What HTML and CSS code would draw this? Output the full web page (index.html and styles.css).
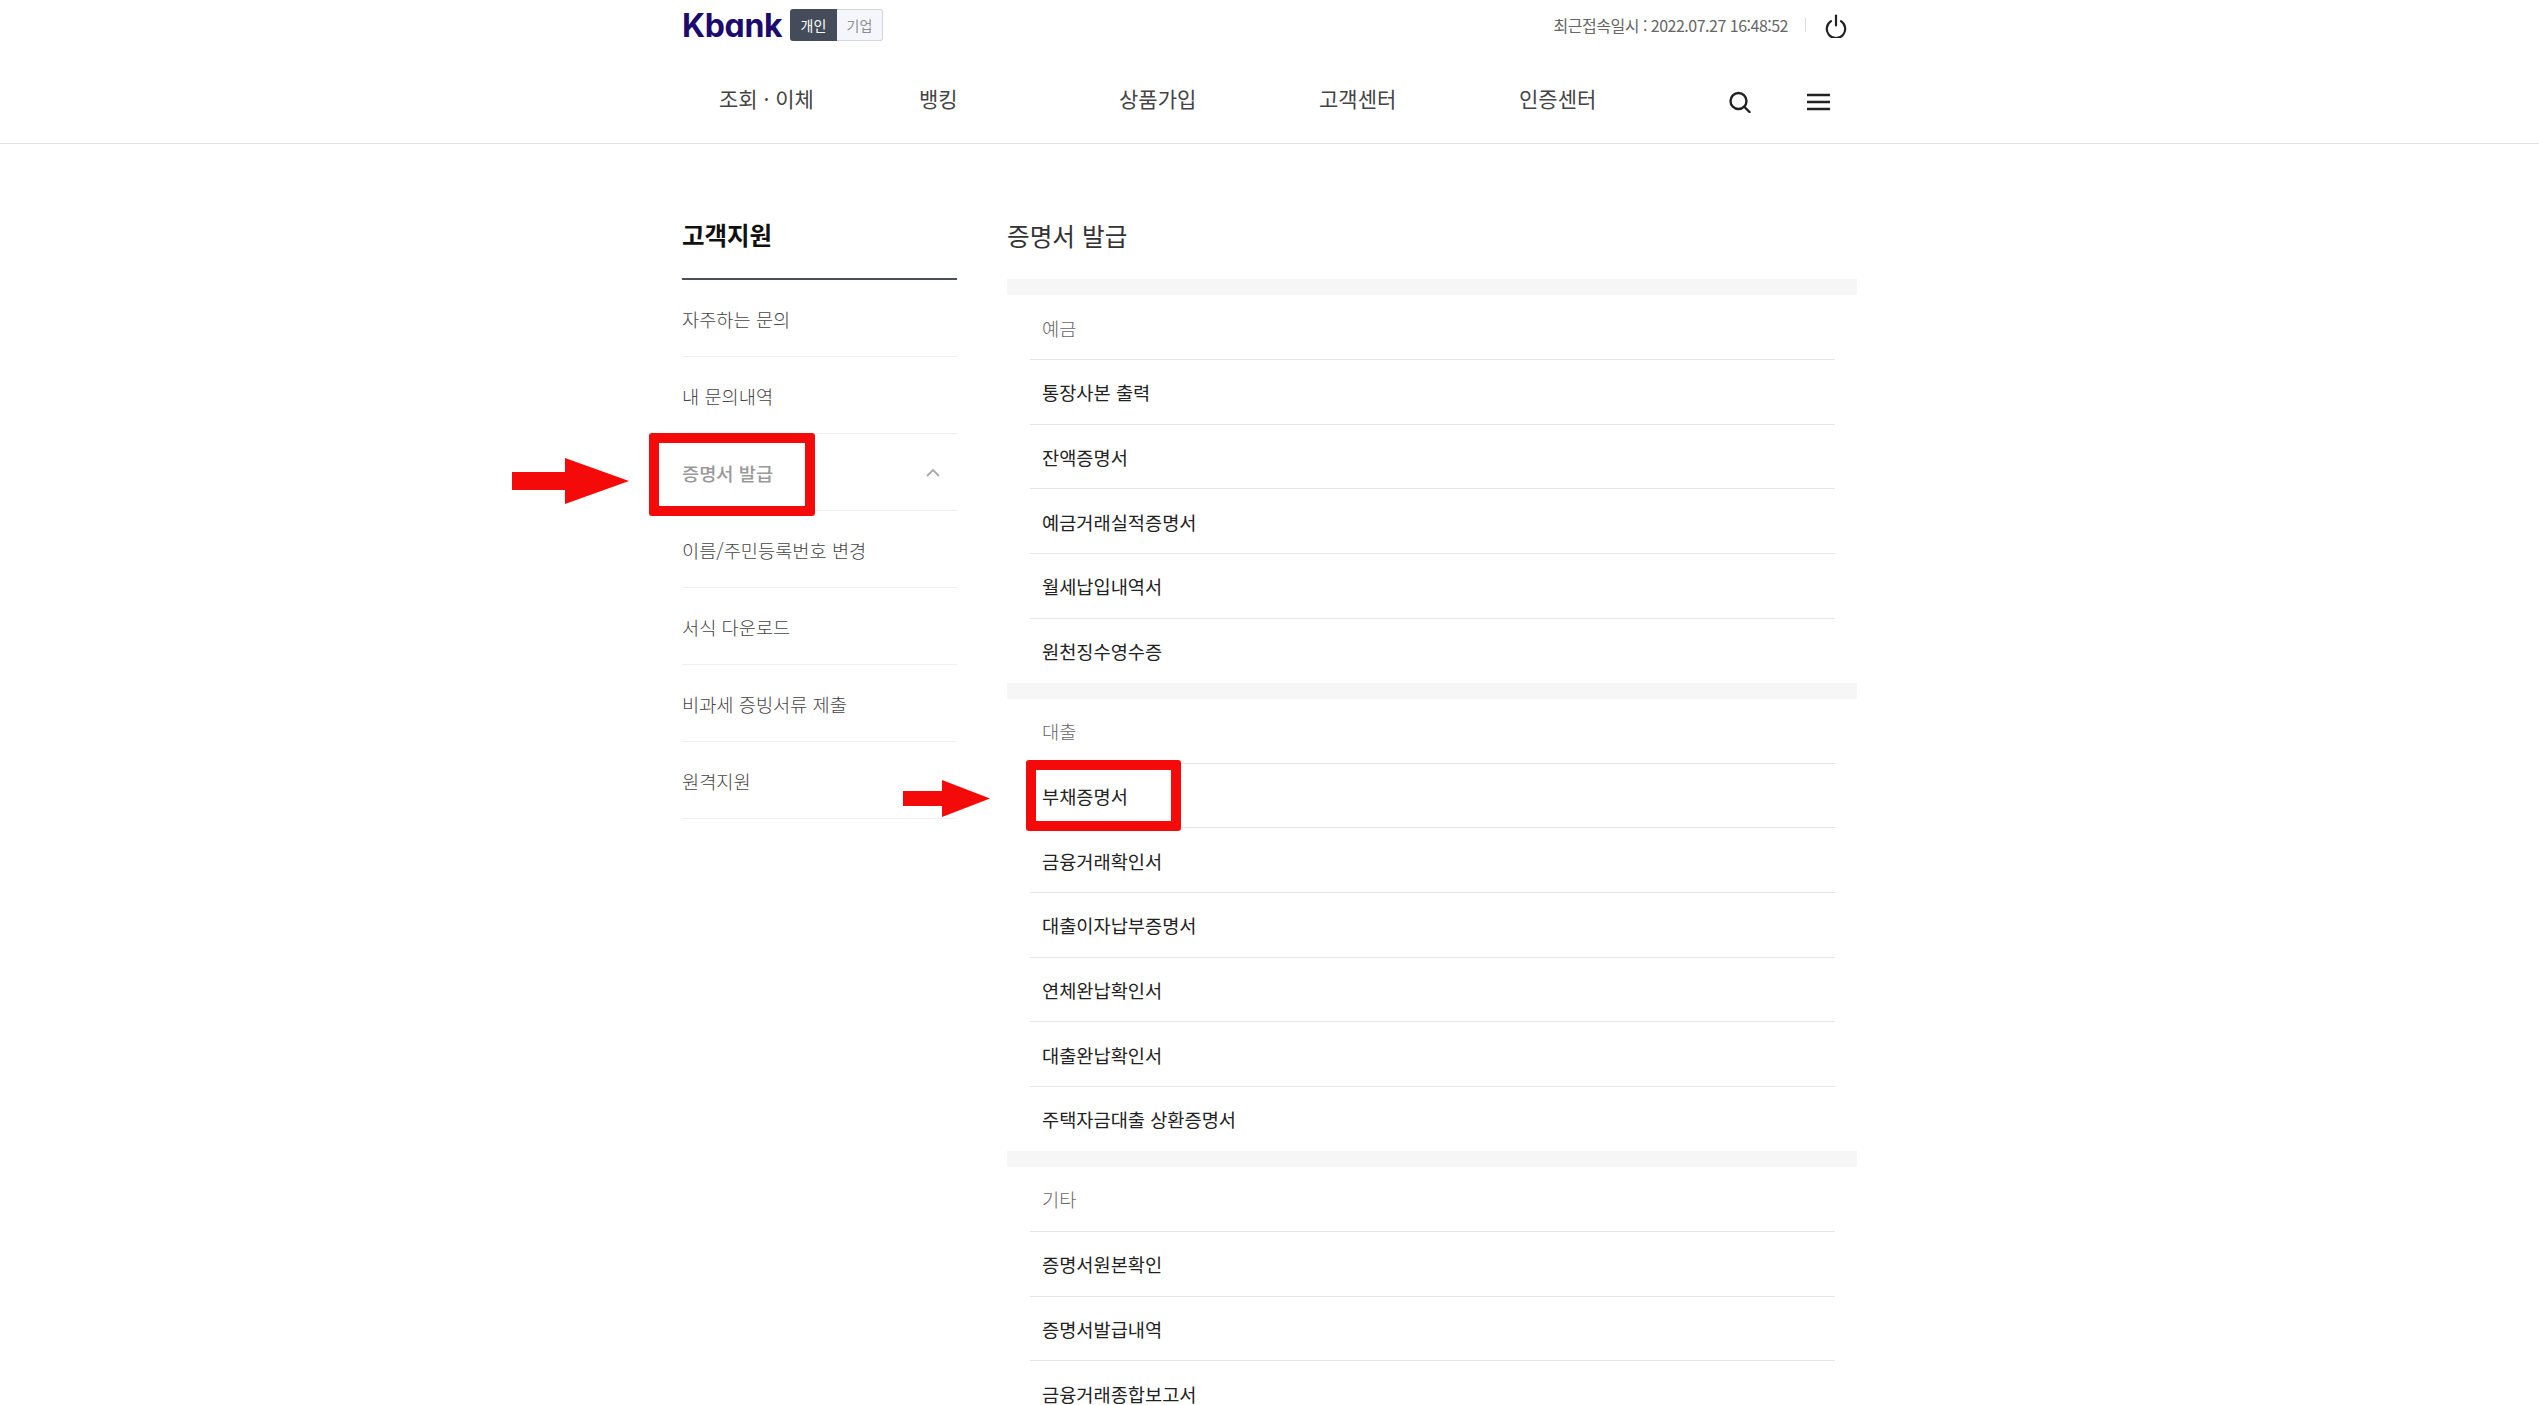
FILE: index.html
```html
<!DOCTYPE html>
<html lang="ko">
<head>
  <meta charset="UTF-8" />
  <title>Kbank | 증명서 발급</title>
  <link rel="stylesheet" href="styles.css">
</head>
<body>
  <div class="page">
    <header class="site-header">
      <div class="header-inner">
        <div class="top-bar">
          <div class="brand">
            <span class="logo">Kbank</span>
            <div class="switch">
              <span class="switch-on">개인</span>
              <span class="switch-off">기업</span>
            </div>
          </div>
          <div class="session">
            <span class="last-login">최근접속일시 : 2022.07.27 16:48:52</span>
            <span class="session-sep"></span>
            <svg class="power-icon" width="22" height="24" viewBox="0 0 22 24" fill="none" stroke="#222" stroke-width="2.2" stroke-linecap="round">
              <path d="M6 7.2a9.2 9.2 0 1 0 10 0" />
              <path d="M11 1.5v10" />
            </svg>
          </div>
        </div>
        <nav class="main-nav">
          <a class="nav-item">조회 · 이체</a>
          <a class="nav-item">뱅킹</a>
          <a class="nav-item">상품가입</a>
          <a class="nav-item">고객센터</a>
          <a class="nav-item">인증센터</a>
          <div class="nav-icons">
            <svg width="24" height="22" viewBox="0 0 24 22" fill="none" stroke="#222" stroke-width="2.4" stroke-linecap="round">
              <circle cx="10.5" cy="10" r="8" />
              <path d="M16.5 16l5 5" />
            </svg>
            <svg width="23" height="18" viewBox="0 0 23 18" fill="none" stroke="#222" stroke-width="2.4">
              <path d="M0 2h23M0 9h23M0 16h23" />
            </svg>
          </div>
        </nav>
      </div>
    </header>

    <main class="content">
      <aside class="side">
        <h2 class="side-title">고객지원</h2>
        <ul class="side-menu">
          <li>자주하는 문의</li>
          <li>내 문의내역</li>
          <li class="active">
            증명서 발급
            <svg width="14" height="9" viewBox="0 0 14 9" fill="none" stroke="#aaa" stroke-width="1.8">
              <path d="M1 8l6-6 6 6" />
            </svg>
          </li>
          <li>이름/주민등록번호 변경</li>
          <li>서식 다운로드</li>
          <li>비과세 증빙서류 제출</li>
          <li>원격지원</li>
        </ul>
      </aside>

      <section class="certs">
        <h1 class="certs-title">증명서 발급</h1>

        <div class="cert-group">
          <h3>예금</h3>
          <ul>
            <li>통장사본 출력</li>
            <li>잔액증명서</li>
            <li>예금거래실적증명서</li>
            <li>월세납입내역서</li>
            <li>원천징수영수증</li>
          </ul>
        </div>

        <div class="cert-group">
          <h3>대출</h3>
          <ul>
            <li>부채증명서</li>
            <li>금융거래확인서</li>
            <li>대출이자납부증명서</li>
            <li>연체완납확인서</li>
            <li>대출완납확인서</li>
            <li>주택자금대출 상환증명서</li>
          </ul>
        </div>

        <div class="cert-group">
          <h3>기타</h3>
          <ul>
            <li>증명서원본확인</li>
            <li>증명서발급내역</li>
            <li>금융거래종합보고서</li>
          </ul>
        </div>
      </section>
    </main>

    <!-- annotations drawn on top of the screenshot -->
    <div class="mark mark-side"></div>
    <div class="mark mark-loan"></div>
    <svg class="arrow arrow-side" width="117" height="46" viewBox="0 0 117 46"><path d="M0 14h53V0l64 23-64 23V32H0z" fill="#f50a0a" /></svg>
    <svg class="arrow arrow-loan" width="87" height="37" viewBox="0 0 87 37"><path d="M0 11h39V0l48 18.500-48 18.500V26H0z" fill="#f50a0a" /></svg>
  </div>
</body>
</html>
```

FILE: styles.css
```css
* {
  margin: 0;
  padding: 0;
  box-sizing: border-box;
}

html,
body {
  height: 100%;
  overflow: hidden;
}

body {
  background: #fff;
  color: #222;
  font-family: "Noto Sans CJK KR", "Noto Sans", sans-serif;
}

ul {
  list-style: none;
}

.page {
  position: relative;
  height: 100vh;
  overflow: hidden;
}

.site-header {
  height: 144px;
  border-bottom: 1px solid #e2e2e2;
}

.header-inner {
  width: 1175px;
  margin: 0 auto;
}

.top-bar {
  display: flex;
  justify-content: space-between;
  align-items: flex-start;
  height: 72px;
  padding-top: 9px;
}

.brand {
  display: flex;
  align-items: center;
  gap: 11px;
}

.logo {
  width: 97px;
  font-family: "Inter", sans-serif;
  font-feature-settings: "cv11";
  font-size: 32px;
  font-weight: 700;
  line-height: 31px;
  letter-spacing: -0.3px;
  color: #1c0a6e;
}

.switch {
  display: flex;
  width: 93px;
  height: 32px;
  font-size: 14px;
  line-height: 30px;
  text-align: center;
}

.switch-on {
  flex: 1;
  background: #454c59;
  color: #fff;
  border-radius: 3px 0 0 3px;
  line-height: 32px;
}

.switch-off {
  width: 46px;
  background: #f5f6fb;
  border: 1px solid #d3d5dc;
  border-left: 0;
  border-radius: 0 3px 3px 0;
  color: #8a8d94;
}

.session {
  display: flex;
  align-items: center;
  height: 32px;
  padding-right: 10px;
}

.last-login {
  font-size: 16px;
  letter-spacing: -0.5px;
  color: #666;
}

.session-sep {
  width: 1px;
  height: 14px;
  margin: 0 19px 0 17px;
  background: #ddd;
}

.power-icon {
  margin-top: 2px;
}

.main-nav {
  display: flex;
  align-items: center;
  height: 52px;
  padding-left: 37px;
}

.nav-item {
  width: 200px;
  font-size: 21px;
  color: #444;
}

.nav-icons {
  display: flex;
  align-items: center;
  gap: 55px;
  margin: 8px 0 0 9px;
}

.content {
  display: flex;
  gap: 50px;
  width: 1175px;
  margin: 0 auto;
}

.side {
  width: 275px;
}

.side-title {
  height: 136px;
  padding-top: 71px;
  border-bottom: 2px solid #4a4f5a;
  font-size: 24.5px;
  line-height: 40px;
  font-weight: 700;
  color: #111;
}

.side-menu li {
  display: flex;
  align-items: center;
  justify-content: space-between;
  height: 77px;
  padding-right: 17px;
  border-bottom: 1px solid #f0f0f0;
  font-size: 18.67px;
  font-weight: 300;
  color: #444;
}

.side-menu .active {
  font-weight: 500;
  color: #999;
}

.certs {
  width: 850px;
}

.certs-title {
  height: 135px;
  padding-top: 71px;
  font-size: 24.67px;
  line-height: 40px;
  font-weight: 400;
  color: #333;
}

.cert-group {
  border-top: 16px solid #f6f6f6;
  padding: 0 22px 0 23px;
}

.cert-group h3,
.cert-group li {
  display: flex;
  align-items: center;
  height: 64.67px;
  padding-left: 12px;
  font-size: 18.67px;
  font-weight: 300;
}

.cert-group h3 {
  height: 65px;
  border-bottom: 1px solid #e6e6e6;
  color: #666;
}

.cert-group li {
  border-bottom: 1px solid #e6e6e6;
  font-weight: 400;
  color: #222;
}

.cert-group li:last-child {
  height: 64px;
  border-bottom: 0;
}

.mark {
  position: absolute;
  border: 10px solid #f50a0a;
  border-radius: 3px;
}

.mark-side {
  left: 649px;
  top: 433px;
  width: 166px;
  height: 83px;
}

.mark-loan {
  left: 1026px;
  top: 760px;
  width: 155px;
  height: 71px;
}

.arrow {
  position: absolute;
}

.arrow-side {
  left: 512px;
  top: 458px;
}

.arrow-loan {
  left: 903px;
  top: 780px;
}
```
